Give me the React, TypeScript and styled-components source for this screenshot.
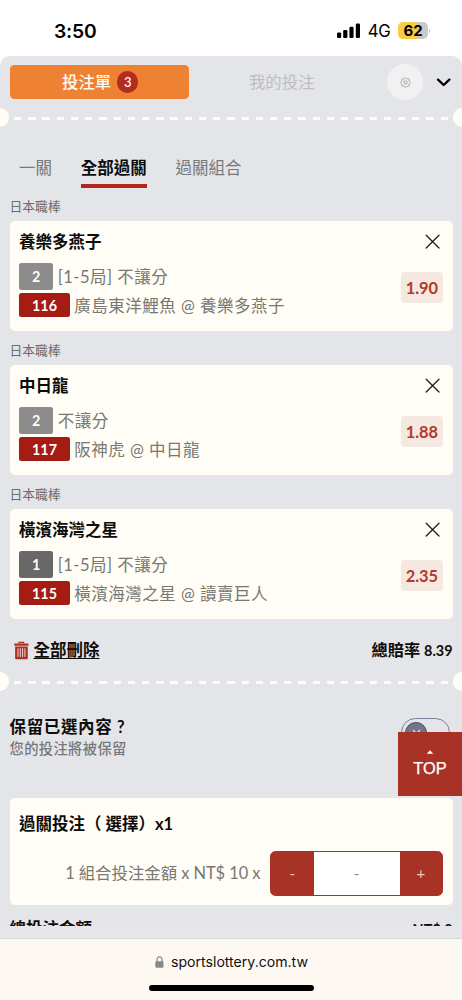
import React from 'react';
import styled, { createGlobalStyle } from 'styled-components';

const Global = createGlobalStyle`
  * { box-sizing: border-box; }
  body {
    margin: 0;
    background: #fff;
    font-family: Lato, "Noto Sans CJK TC", sans-serif;
    color: #0c0c0c;
  }
  button { font: inherit; border: 0; padding: 0; margin: 0; background: none; color: inherit; }
`;

const Screen = styled.div`
  width: 462px;
  height: 1000px;
  overflow: hidden;
  display: flex;
  flex-direction: column;
  background: #fffdf5;
`;

const StatusBar = styled.header`
  height: 56px;
  flex: none;
  display: flex;
  align-items: center;
  padding: 5px 31px 0 54px;
  background: #fff;
  font-family: Inter, sans-serif;
  color: #000;
`;

const Clock = styled.span`
  flex: 1;
  font-size: 19.3px;
  font-weight: 600;
  line-height: 24px;
  letter-spacing: -0.2px;
`;

const Network = styled.span`
  font-size: 16.8px;
  line-height: 24px;
  letter-spacing: -0.3px;
  margin: 1px 7.5px 0 6.5px;
`;

const Battery = styled.span`
  width: 30px;
  height: 17px;
  border-radius: 5px;
  background: linear-gradient(90deg, #f6cd45 62%, #c9c9c9 62%);
  font-size: 15px;
  font-weight: 700;
  line-height: 17px;
  text-align: center;
`;

const Sheet = styled.main`
  height: 870px;
  flex: none;
  overflow: hidden;
  background: #e4e5e8;
  border-radius: 10px 10px 0 0;
`;

const TopRow = styled.div`
  height: 52px;
  display: flex;
  align-items: center;
  padding: 0 10px 0 9.5px;
`;

const SlipTab = styled.button`
  width: 179.5px;
  height: 33.5px;
  padding-left: 2px;
  border-radius: 4.5px;
  background: #ef8132;
  color: #fffdf5;
  font-size: 16.4px;
  font-weight: 500;
  display: flex;
  align-items: center;
  justify-content: center;
  gap: 6px;
  line-height: 20px;
`;

const Count = styled.span`
  width: 21.3px;
  height: 21.3px;
  border-radius: 50%;
  background: #b32c20;
  font-size: 13px;
  line-height: 22px;
`;

const MineTab = styled.button`
  flex: 1;
  font-size: 16.4px;
  line-height: 20px;
  text-align: center;
  color: #bcbdbf;
  padding-right: 12.5px;
`;

const GearButton = styled.button`
  width: 36px;
  height: 36px;
  margin-right: 13px;
  border-radius: 50%;
  background: #f1f1f2;
  display: grid;
  place-items: center;
`;

const Tear = styled.div`
  height: 19px;
  display: flex;
  align-items: center;
  justify-content: space-between;
`;

const Notch = styled.span<{ $side: 'left' | 'right' }>`
  width: 9.4px;
  height: 19px;
  background: #fffdf5;
  border-radius: ${(p) => (p.$side === 'left' ? '0 9.5px 9.5px 0' : '9.5px 0 0 9.5px')};
`;

const Dashes = styled.span`
  flex: 1;
  height: 2.4px;
  margin: 2px 4px 0 4.7px;
  background: repeating-linear-gradient(90deg, #fffdf5 0 7.3px, transparent 7.3px 14.22px);
`;

const Modes = styled.nav`
  display: flex;
  gap: 28.8px;
  padding: 27.5px 0 0 19px;
  height: 60.4px;
`;

const Mode = styled.button<{ $active?: boolean }>`
  height: 33.3px;
  font-size: 16.5px;
  line-height: 26px;
  padding-bottom: 4px;
  font-weight: ${(p) => (p.$active ? 700 : 400)};
  color: ${(p) => (p.$active ? '#0c0c0c' : '#77787a')};
  border-bottom: 4px solid ${(p) => (p.$active ? '#b4261d' : 'transparent')};
`;

const Bets = styled.section`
  padding: 0 9.5px;
`;

const League = styled.div`
  height: 33.6px;
  padding-top: 9px;
  font-size: 12.8px;
  line-height: 20px;
  color: #6b6c6e;
`;

const Card = styled.article`
  height: 110.2px;
  padding: 10px 9.5px;
  border-radius: 5px;
  background: #fffdf5;
`;

const CardHead = styled.div`
  height: 22px;
  display: flex;
  align-items: center;
  justify-content: space-between;
  padding-right: 2.8px;
`;

const CardTitle = styled.h3`
  margin: 0;
  padding-top: 1px;
  font-size: 16.5px;
  line-height: 22px;
  font-weight: 700;
`;

const CardBody = styled.div`
  display: flex;
  align-items: center;
  justify-content: space-between;
  margin-top: 10.3px;
`;

const Line = styled.div<{ $gap?: string }>`
  display: flex;
  align-items: center;
  gap: 4.3px;
  margin-bottom: ${(p) => p.$gap ?? '0'};
  font-size: 16.5px;
  line-height: 24px;
  letter-spacing: 0.5px;
  color: #777773;
  white-space: pre;
`;

const LineText = styled.span`
  padding-top: 1px;
`;

const Tag = styled.span<{ $bg: string; $w: string; $h: string }>`
  width: ${(p) => p.$w};
  height: ${(p) => p.$h};
  line-height: calc(${(p) => p.$h} + 1px);
  border-radius: 2.5px;
  background: ${(p) => p.$bg};
  color: #fffdf5;
  font-size: 14.3px;
  font-weight: 700;
  letter-spacing: 0;
  text-align: center;
`;

const Odds = styled.button`
  width: 42.2px;
  height: 31px;
  margin-top: -6.2px;
  border-radius: 4px;
  background: #f5e8e0;
  color: #b03a2e;
  font-size: 16.4px;
  font-weight: 700;
  line-height: 31px;
`;

const Summary = styled.div`
  height: 53.2px;
  display: flex;
  align-items: center;
  justify-content: space-between;
  padding: 9.6px 9.5px 0 14px;
  font-weight: 700;
`;

const ClearAll = styled.button`
  display: flex;
  align-items: center;
  gap: 4.5px;
  font-size: 16.5px;
  line-height: 24px;
`;

const ClearLabel = styled.span`
  text-decoration: underline;
  text-decoration-thickness: 1px;
  text-underline-offset: 2px;
`;

const TotalOdds = styled.span`
  font-size: 16.2px;
  line-height: 24px;
  small { font-size: 14.4px; }
`;

const Keep = styled.section`
  height: 106.8px;
  display: flex;
  justify-content: space-between;
  padding: 25px 12px 0 9.5px;
`;

const KeepTitle = styled.div`
  font-size: 16.5px;
  line-height: 22px;
  letter-spacing: 0.65px;
  font-weight: 700;
`;

const KeepHint = styled.div`
  font-size: 14.3px;
  line-height: 22px;
  letter-spacing: 0.35px;
  font-weight: 500;
  color: #77787a;
`;

const Toggle = styled.div`
  width: 49.5px;
  height: 29px;
  margin-top: 2.5px;
  padding: 3px 3.8px;
  border: 1.3px solid #7e7b98;
  border-radius: 15px;
`;

const Knob = styled.div`
  width: 21.5px;
  height: 21.5px;
  border-radius: 50%;
  border: 1.2px solid #4b4a68;
  background: #73748c;
  display: grid;
  place-items: center;
`;

const Stake = styled.section`
  height: 107px;
  margin: 0 9.5px;
  padding: 14.5px 9.5px 0;
  border-radius: 5px;
  background: #fffdf5;
`;

const StakeRow = styled.div`
  display: flex;
  align-items: center;
  justify-content: flex-end;
  margin-top: 15.3px;
  gap: 9.5px;
`;

const StakeText = styled.span`
  font-size: 16.4px;
  line-height: 24px;
  word-spacing: -0.1px;
  color: #777773;
`;

const Stepper = styled.div`
  width: 173px;
  height: 45px;
  display: flex;
  border: 1.3px solid #a93226;
  border-radius: 5.5px;
  overflow: hidden;
  background: #a93226;
`;

const Step = styled.button`
  width: 42.5px;
  color: #efc9bd;
  font-size: 15px;
`;

const Amount = styled.div`
  flex: 1;
  background: #fff;
  color: #888;
  font-size: 15px;
  line-height: 42px;
  text-align: center;
`;

const GrandTotal = styled.div`
  display: flex;
  justify-content: space-between;
  padding: 12px 9.5px 0;
  font-size: 16.5px;
  line-height: 24px;
  font-weight: 700;
  span + span { font-size: 14.4px; padding-top: 1px; }
`;

const Browser = styled.footer`
  flex: 1;
  display: flex;
  flex-direction: column;
  align-items: center;
  background: #fdf9f2;
  border-top: 12px solid #e7e7e9;
  box-shadow: inset 0 1px 0 #d9d8da;
`;

const Address = styled.div`
  display: flex;
  align-items: center;
  gap: 7px;
  height: 24px;
  margin-top: 11.5px;
  padding-left: 1px;
  font-family: Inter, sans-serif;
  font-size: 14.1px;
  color: #111;
`;

const HomeBar = styled.div`
  width: 165px;
  height: 6px;
  margin-top: 11px;
  border-radius: 3px;
  background: #000;
`;

const BackToTop = styled.button`
  position: absolute;
  left: 398px;
  top: 732px;
  width: 64px;
  height: 64.3px;
  background: #a83226;
  color: #fff;
  display: flex;
  flex-direction: column;
  align-items: center;
  justify-content: center;
  gap: 3px;
  font-family: "Liberation Sans", Arial, sans-serif;
  font-size: 16.4px;
  line-height: 20px;
  -webkit-text-stroke: 0.25px #fff;
`;

const bets = [
  { team: '養樂多燕子', pick: '2', market: '[1-5局] 不讓分', no: '116', game: '廣島東洋鯉魚 @ 養樂多燕子', odds: '1.90' },
  { team: '中日龍', pick: '2', market: '不讓分', no: '117', game: '阪神虎 @ 中日龍', odds: '1.88' },
  { team: '橫濱海灣之星', pick: '1', market: '[1-5局] 不讓分', no: '115', game: '橫濱海灣之星 @ 讀賣巨人', odds: '2.35' },
];

const TearLine = () => (
  <Tear>
    <Notch $side="left" />
    <Dashes />
    <Notch $side="right" />
  </Tear>
);

const Signal = () => (
  <svg width="24" height="16" viewBox="0 0 24 16">
    <rect x="0" y="9.5" width="4.2" height="5.5" rx="1.2" />
    <rect x="6.2" y="7" width="4.2" height="8" rx="1.2" />
    <rect x="12.4" y="3.8" width="4.2" height="11.2" rx="1.2" />
    <rect x="18.8" y="0.5" width="4.2" height="14.5" rx="1.2" />
  </svg>
);

const gearPath = (() => {
  const pts: string[] = [];
  for (let i = 0; i <= 64; i++) {
    const a = (i / 64) * Math.PI * 2;
    const r = 4.4 + 0.45 * Math.cos(a * 8);
    pts.push(`${(5.5 + r * Math.sin(a)).toFixed(2)} ${(5.5 - r * Math.cos(a)).toFixed(2)}`);
  }
  return `M${pts.join('L')}Z`;
})();

const Gear = () => (
  <svg width="11" height="11" viewBox="0 0 11 11" fill="none" stroke="#8e8f92" strokeWidth="0.8">
    <path d={gearPath} />
    <circle cx="5.5" cy="5.5" r="1.6" />
  </svg>
);

const Cross = () => (
  <svg width="15" height="15" viewBox="0 0 15 15" stroke="#222" strokeWidth="1.35" strokeLinecap="round">
    <path d="M1.2 1.2l12.8 12.8M14 1.2L1.2 14" />
  </svg>
);

const Trash = () => (
  <svg width="15" height="19" viewBox="0 0 15 19" fill="none">
    <path d="M5 2.6V1.3h4.6v1.3" stroke="#b03024" strokeWidth="1.2" />
    <rect x="0.2" y="2.6" width="14.4" height="2.1" rx="0.6" fill="#b03024" />
    <path d="M1.1 5.6h12.7v11.6a1 1 0 0 1-1 1H2.1a1 1 0 0 1-1-1z" fill="#b03024" />
    <path d="M4 7.3v8.6M6.3 7.3v8.6M8.6 7.3v8.6M10.9 7.3v8.6" stroke="#e9d3d1" strokeWidth="1" />
  </svg>
);

export default function App() {
  return (
    <>
      <Global />
      <Screen>
        <StatusBar>
          <Clock>3:50</Clock>
          <Signal />
          <Network>4G</Network>
          <Battery>62</Battery>
          <svg width="3" height="6" viewBox="0 0 3 6"><path d="M1 .8a2.4 2.4 0 0 1 0 4.4z" fill="#c9c9c9" /></svg>
        </StatusBar>
        <Sheet>
          <TopRow>
            <SlipTab>投注單<Count>3</Count></SlipTab>
            <MineTab>我的投注</MineTab>
            <GearButton><Gear /></GearButton>
            <svg width="16" height="10" viewBox="0 0 16 10" fill="none" stroke="#000" strokeWidth="2.3" strokeLinecap="round" strokeLinejoin="round">
              <path d="M2 2.6l5.7 5.4 5.7-5.4" />
            </svg>
          </TopRow>
          <TearLine />
          <Modes>
            <Mode>一關</Mode>
            <Mode $active>全部過關</Mode>
            <Mode>過關組合</Mode>
          </Modes>
          <Bets>
            {bets.map((b) => (
              <React.Fragment key={b.no}>
                <League>日本職棒</League>
                <Card>
                  <CardHead>
                    <CardTitle>{b.team}</CardTitle>
                    <Cross />
                  </CardHead>
                  <CardBody>
                    <div>
                      <Line $gap="2.9px">
                        <Tag $bg={b.pick === '1' ? '#686868' : '#8c8c8c'} $w="34.4px" $h="26.8px">{b.pick}</Tag>
                        <LineText>{b.market}</LineText>
                      </Line>
                      <Line>
                        <Tag $bg="#a41c14" $w="51px" $h="24px">{b.no}</Tag>
                        <LineText>{b.game}</LineText>
                      </Line>
                    </div>
                    <Odds>{b.odds}</Odds>
                  </CardBody>
                </Card>
              </React.Fragment>
            ))}
          </Bets>
          <Summary>
            <ClearAll><Trash /><ClearLabel>全部刪除</ClearLabel></ClearAll>
            <TotalOdds>總賠率 <small>8.39</small></TotalOdds>
          </Summary>
          <TearLine />
          <Keep>
            <div>
              <KeepTitle>保留已選內容 ?</KeepTitle>
              <KeepHint>您的投注將被保留</KeepHint>
            </div>
            <Toggle>
              <Knob>
                <svg width="9" height="9" viewBox="0 0 9 9" stroke="#e4e5e8" strokeWidth="1.3"><path d="M1 1l7 7M8 1L1 8" /></svg>
              </Knob>
            </Toggle>
          </Keep>
          <Stake>
            <CardTitle>過關投注（ 選擇）x1</CardTitle>
            <StakeRow>
              <StakeText>1 組合投注金額 x NT$ 10 x</StakeText>
              <Stepper>
                <Step>-</Step>
                <Amount>-</Amount>
                <Step>+</Step>
              </Stepper>
            </StakeRow>
          </Stake>
          <GrandTotal><span>總投注金額</span><span>NT$ 0</span></GrandTotal>
        </Sheet>
        <Browser>
          <Address>
            <svg width="9" height="12" viewBox="0 0 9 12" fill="none">
              <path d="M2 6V3.4a2.5 2.5 0 0 1 5 0V6" stroke="#8b8987" strokeWidth="1.2" />
              <rect x="0.3" y="5.2" width="8.2" height="6.5" rx="1.2" fill="#8b8987" />
            </svg>
            sportslottery.com.tw
          </Address>
          <HomeBar />
        </Browser>
        <BackToTop>
          <svg width="8" height="5" viewBox="0 0 8 5" fill="#fff"><path d="M4 .3L7.3 3.8H.7z" /></svg>
          TOP
        </BackToTop>
      </Screen>
    </>
  );
}
